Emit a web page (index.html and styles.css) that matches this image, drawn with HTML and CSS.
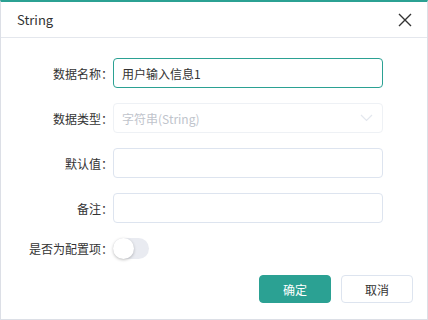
FILE: index.html
```html
<!DOCTYPE html>
<html lang="zh">
<head>
<meta charset="utf-8">
<link rel="stylesheet" href="styles.css">
</head>
<body>
<div class="dialog">
  <div class="header">
    <span class="title">String</span>
    <svg class="close" width="14" height="14" viewBox="0 0 14 14"><path d="M1 1L13 13M13 1L1 13" stroke="#333" stroke-width="1.4" fill="none"/></svg>
  </div>
  <div class="form">
    <label class="label">数据名称：</label>
    <div class="input focus">用户输入信息1</div>
    <label class="label">数据类型：</label>
    <div class="input disabled">字符串(String)<svg class="chev" width="13" height="8" viewBox="0 0 13 8"><path d="M1 1L6.5 6.5L12 1" stroke="#e3e7ee" stroke-width="1.2" fill="none"/></svg></div>
    <label class="label">默认值：</label>
    <div class="input"></div>
    <label class="label">备注：</label>
    <div class="input"></div>
    <label class="label">是否为配置项：</label>
    <div class="switch-cell"><span class="switch"><span class="knob"></span></span></div>
  </div>
  <div class="footer">
    <button class="btn primary">确定</button>
    <button class="btn">取消</button>
  </div>
</div>
</body>
</html>
```
FILE: styles.css
```css
html, body {
  margin: 0;
  padding: 0;
  background: #fff;
}
body {
  font-family: "Noto Sans CJK SC", "Noto Sans", sans-serif;
  color: #333;
  font-size: 12px;
}
.dialog {
  width: 428px;
  height: 320px;
  box-sizing: border-box;
  border: 1px solid #dcdfe6;
  border-top: 2px solid #2ba193;
  display: flex;
  flex-direction: column;
}
.header {
  height: 35px;
  border-bottom: 1px solid #e4e7ed;
  display: flex;
  align-items: center;
  justify-content: space-between;
  padding: 0 15px 0 16px;
}
.title {
  font-size: 13px;
  color: #333;
  line-height: 1;
  margin-top: -1px;
}
.close {
  display: block;
}
.form {
  display: grid;
  grid-template-columns: 112px 270px;
  grid-template-rows: 30px 30px 30px 30px 21px;
  row-gap: 15px;
  padding-top: 20px;
  align-items: center;
}
.label {
  text-align: right;
  font-size: 12px;
  color: #333;
  white-space: nowrap;
}
.input {
  height: 30px;
  box-sizing: border-box;
  border: 1px solid #dde4ef;
  border-radius: 4px;
  padding: 0 8px;
  display: flex;
  align-items: center;
  font-size: 12px;
  color: #333;
  background: #fff;
}
.input.focus {
  border-color: #2ba193;
}
.input.disabled {
  border-color: #eef1f5;
  color: #c0c4cc;
  justify-content: space-between;
}
.chev {
  display: block;
  margin-right: 1px;
}
.switch-cell {
  display: flex;
  align-items: center;
  height: 21px;
}
.switch {
  width: 36px;
  height: 21px;
  border-radius: 11px;
  background: #e9ebf1;
  position: relative;
  display: block;
}
.knob {
  position: absolute;
  left: 0;
  top: 0;
  width: 21px;
  height: 21px;
  border-radius: 50%;
  background: #fff;
  box-shadow: 0 1px 3px rgba(0,0,0,0.25);
}
.footer {
  display: flex;
  justify-content: flex-end;
  gap: 10px;
  padding: 16px 14px 0 0;
}
.btn {
  width: 72px;
  height: 28px;
  border-radius: 4px;
  border: 1px solid #dde4ef;
  background: #fff;
  color: #333;
  font-family: "Noto Sans CJK SC", sans-serif;
  font-size: 12px;
  padding: 0;
}
.btn.primary {
  background: #2ba193;
  border-color: #2ba193;
  color: #fff;
}
```
